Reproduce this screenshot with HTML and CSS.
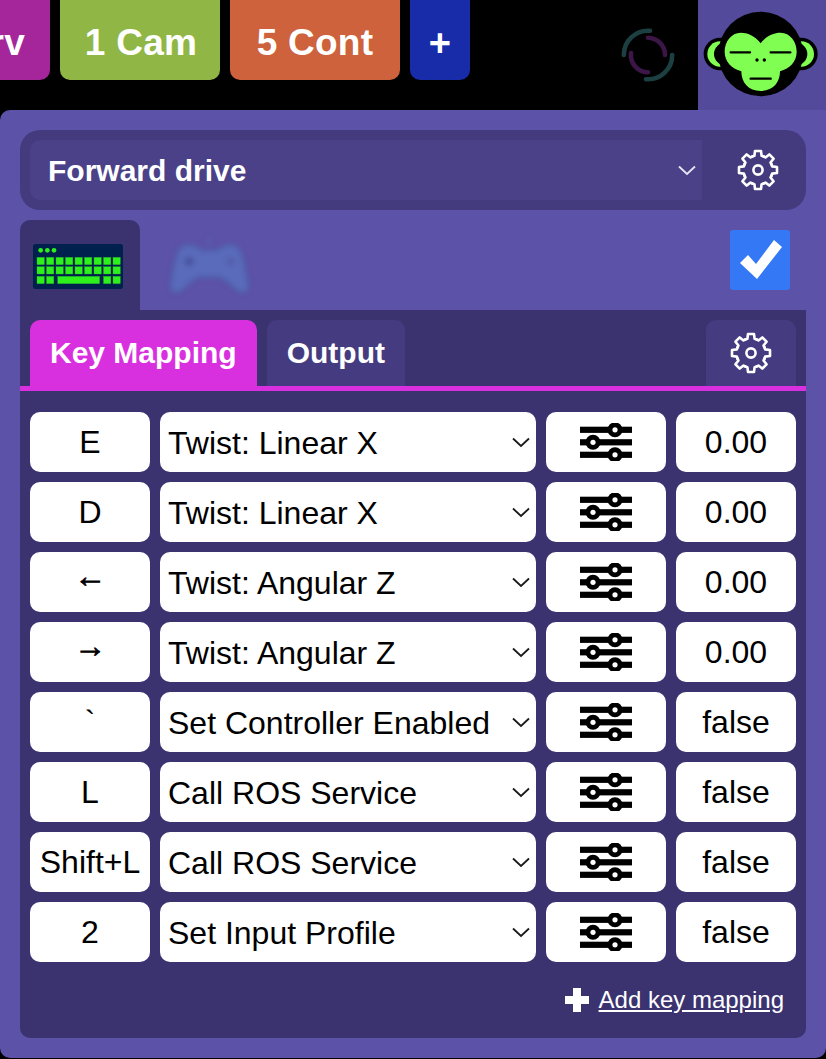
FILE: index.html
```html
<!DOCTYPE html>
<html lang="en">
<head>
<meta charset="utf-8">
<title>Input</title>
<link rel="stylesheet" href="styles.css">
</head>
<body>
<svg class="defs" width="0" height="0" aria-hidden="true">
  <defs>
    <symbol id="gear" viewBox="-22 -22 44 44">
      <g class="gear-lines">
        <polyline id="tooth" points="-6,-13.4 -3.6,-14.13 -3,-19 3,-19 3.6,-14.13 6,-13.4"/>
        <polyline transform="rotate(45)" points="-6,-13.4 -3.6,-14.13 -3,-19 3,-19 3.6,-14.13 6,-13.4"/>
        <polyline transform="rotate(90)" points="-6,-13.4 -3.6,-14.13 -3,-19 3,-19 3.6,-14.13 6,-13.4"/>
        <polyline transform="rotate(135)" points="-6,-13.4 -3.6,-14.13 -3,-19 3,-19 3.6,-14.13 6,-13.4"/>
        <polyline transform="rotate(180)" points="-6,-13.4 -3.6,-14.13 -3,-19 3,-19 3.6,-14.13 6,-13.4"/>
        <polyline transform="rotate(225)" points="-6,-13.4 -3.6,-14.13 -3,-19 3,-19 3.6,-14.13 6,-13.4"/>
        <polyline transform="rotate(270)" points="-6,-13.4 -3.6,-14.13 -3,-19 3,-19 3.6,-14.13 6,-13.4"/>
        <polyline transform="rotate(315)" points="-6,-13.4 -3.6,-14.13 -3,-19 3,-19 3.6,-14.13 6,-13.4"/>
        <circle r="4.6"/>
      </g>
    </symbol>
    <symbol id="sliders" viewBox="0 0 52 38">
      <rect x="0" y="3.700" width="52" height="6.200"/>
      <rect x="0" y="16.200" width="52" height="6.200"/>
      <rect x="0" y="28.700" width="52" height="6.200"/>
      <circle cx="35" cy="6.800" r="7.500"/><circle cx="35" cy="6.800" r="2.600" fill="#fff"/>
      <circle cx="13" cy="19.300" r="7.500"/><circle cx="13" cy="19.300" r="2.600" fill="#fff"/>
      <circle cx="35" cy="31.800" r="7.500"/><circle cx="35" cy="31.800" r="2.600" fill="#fff"/>
    </symbol>
    <symbol id="chev" viewBox="0 0 18 11">
      <polyline points="1,1.500 9,9 17,1.500"/>
    </symbol>
  </defs>
</svg>

<header class="topbar">
  <div class="tab tab-serv"><span>Serv</span></div>
  <div class="tab tab-cam">1 Cam</div>
  <div class="tab tab-cont">5 Cont</div>
  <div class="tab tab-add">+</div>
  <svg class="spinner" width="60" height="60" viewBox="-30 -30 60 60">
    <path class="spin-outer" d="M2 -24.200 A24.200 24.200 0 0 0 -24.200 0"/>
    <path class="spin-outer" d="M-2 24.200 A24.200 24.200 0 0 0 24.200 0"/>
    <path class="spin-inner" d="M0 -17.200 A17.200 17.200 0 0 1 17 0"/>
    <path class="spin-inner" d="M0 17.200 A17.200 17.200 0 0 1 -17 -2"/>
  </svg>
  <div class="avatar">
    <svg width="128" height="110" viewBox="294 0 384 330">
      <circle cx="360" cy="162" r="49" fill="#000"/>
      <circle cx="604" cy="162" r="49" fill="#000"/>
      <circle cx="360" cy="162" r="38" fill="#80ff52"/>
      <circle cx="604" cy="162" r="38" fill="#80ff52"/>
      <circle cx="376" cy="162" r="34" fill="#000"/>
      <circle cx="588" cy="162" r="34" fill="#000"/>
      <circle cx="482" cy="162" r="127" fill="#000"/>
      <path fill="#80ff52" d="M482 130C465 107 442 98 422 98C394 98 374 125 374 155C374 185 394 205 424 214C424 248 445 273 482 273C519 273 540 248 540 214C570 205 590 185 590 155C590 125 570 98 542 98C522 98 499 107 482 130Z"/>
      <path class="mk-line" d="M392 157H450M512 157H571"/>
      <path class="mk-line" d="M452 236H512"/>
      <circle cx="471" cy="180" r="5"/>
      <circle cx="493" cy="180" r="5"/>
    </svg>
  </div>
</header>

<main class="panel">
  <div class="profile">
    <div class="profile-select">
      <select class="profile-input"><option>Forward drive</option></select>
      <svg class="chev chev-light" width="18" height="11"><use href="#chev"/></svg>
    </div>
    <svg class="gear gear-profile" width="44" height="44"><use href="#gear"/></svg>
  </div>

  <div class="devices">
    <div class="device device-active">
      <svg width="90" height="45" viewBox="100 102 270 135">
        <rect class="kb-bg" x="100" y="102" width="270" height="135" rx="8"/>
        <g class="kb-dot"><circle cx="123" cy="121" r="7"/><circle cx="143" cy="121" r="7"/><circle cx="163" cy="121" r="7"/></g>
        <g class="kb-key">
          <rect x="112" y="142" width="22" height="22"/><rect x="140.500" y="142" width="22" height="22"/><rect x="169" y="142" width="22" height="22"/><rect x="197.500" y="142" width="22" height="22"/><rect x="226" y="142" width="22" height="22"/><rect x="254.500" y="142" width="22" height="22"/><rect x="283" y="142" width="22" height="22"/><rect x="311.500" y="142" width="22" height="22"/><rect x="340" y="142" width="22" height="22"/>
          <rect x="112" y="170" width="22" height="22"/><rect x="140.500" y="170" width="22" height="22"/><rect x="169" y="170" width="22" height="22"/><rect x="197.500" y="170" width="22" height="22"/><rect x="226" y="170" width="22" height="22"/><rect x="254.500" y="170" width="22" height="22"/><rect x="283" y="170" width="22" height="22"/><rect x="311.500" y="170" width="22" height="22"/><rect x="340" y="170" width="22" height="22"/>
          <rect x="112" y="199" width="22" height="22"/><rect x="140.500" y="199" width="22" height="22"/><rect x="174" y="199" width="126" height="22"/><rect x="311.500" y="199" width="22" height="22"/><rect x="340" y="199" width="22" height="22"/>
        </g>
      </svg>
    </div>
    <div class="device device-pad">
      <svg class="gamepad" width="94" height="75" viewBox="490 60 280 224">
        <path class="pad-cord" d="M628 75V110"/>
        <path class="pad-body" d="M550 108C572 100 592 110 606 122H650C664 110 684 100 706 108C726 116 734 170 743 222C747 246 724 252 708 238C692 222 678 206 658 200H598C578 206 564 222 548 238C532 252 509 246 513 222C522 170 530 116 550 108Z"/>
        <circle class="pad-hole" cx="568" cy="154" r="15"/>
        <circle class="pad-hole-soft" cx="692" cy="154" r="15"/>
      </svg>
    </div>
    <div class="check">
      <svg width="44" height="42" viewBox="0 0 44 42"><path d="M2 24L10 16 18 25 36 1 44 8 19 40Z"/></svg>
    </div>
  </div>

  <section class="content">
    <nav class="subtabs">
      <div class="subtab subtab-active">Key Mapping</div>
      <div class="subtab">Output</div>
      <div class="subtab subtab-gear"><svg class="gear" width="44" height="44"><use href="#gear"/></svg></div>
    </nav>

    <div class="rows">
      <div class="row"><div class="cell">E</div><div class="select-wrap"><select class="cell-select"><option>Twist: Linear X</option></select><svg class="chev" width="18" height="11"><use href="#chev"/></svg></div><div class="cell"><svg class="slider-icon" width="52" height="38"><use href="#sliders"/></svg></div><div class="cell">0.00</div></div>
      <div class="row"><div class="cell">D</div><div class="select-wrap"><select class="cell-select"><option>Twist: Linear X</option></select><svg class="chev" width="18" height="11"><use href="#chev"/></svg></div><div class="cell"><svg class="slider-icon" width="52" height="38"><use href="#sliders"/></svg></div><div class="cell">0.00</div></div>
      <div class="row"><div class="cell cell-arrow">←</div><div class="select-wrap"><select class="cell-select"><option>Twist: Angular Z</option></select><svg class="chev" width="18" height="11"><use href="#chev"/></svg></div><div class="cell"><svg class="slider-icon" width="52" height="38"><use href="#sliders"/></svg></div><div class="cell">0.00</div></div>
      <div class="row"><div class="cell cell-arrow">→</div><div class="select-wrap"><select class="cell-select"><option>Twist: Angular Z</option></select><svg class="chev" width="18" height="11"><use href="#chev"/></svg></div><div class="cell"><svg class="slider-icon" width="52" height="38"><use href="#sliders"/></svg></div><div class="cell">0.00</div></div>
      <div class="row"><div class="cell">`</div><div class="select-wrap"><select class="cell-select"><option>Set Controller Enabled</option></select><svg class="chev" width="18" height="11"><use href="#chev"/></svg></div><div class="cell"><svg class="slider-icon" width="52" height="38"><use href="#sliders"/></svg></div><div class="cell">false</div></div>
      <div class="row"><div class="cell">L</div><div class="select-wrap"><select class="cell-select"><option>Call ROS Service</option></select><svg class="chev" width="18" height="11"><use href="#chev"/></svg></div><div class="cell"><svg class="slider-icon" width="52" height="38"><use href="#sliders"/></svg></div><div class="cell">false</div></div>
      <div class="row"><div class="cell">Shift+L</div><div class="select-wrap"><select class="cell-select"><option>Call ROS Service</option></select><svg class="chev" width="18" height="11"><use href="#chev"/></svg></div><div class="cell"><svg class="slider-icon" width="52" height="38"><use href="#sliders"/></svg></div><div class="cell">false</div></div>
      <div class="row"><div class="cell">2</div><div class="select-wrap"><select class="cell-select"><option>Set Input Profile</option></select><svg class="chev" width="18" height="11"><use href="#chev"/></svg></div><div class="cell"><svg class="slider-icon" width="52" height="38"><use href="#sliders"/></svg></div><div class="cell">false</div></div>
    </div>

    <div class="add-row">
      <svg class="add-plus" width="24" height="24" viewBox="0 0 24 24"><path d="M8 0H16V8H24V16H16V24H8V16H0V8H8Z"/></svg>
      <a class="add-link" href="#">Add key mapping</a>
    </div>
  </section>
</main>
</body>
</html>
```
FILE: styles.css
```css
* { box-sizing: border-box; }
html, body { margin: 0; padding: 0; }
body {
  width: 826px;
  height: 1059px;
  overflow: hidden;
  background: #000;
  font-family: "Liberation Sans", Arial, sans-serif;
  color: #000;
}
.defs { display: block; width: 0; height: 0; }
.gear-lines polyline, .gear-lines circle {
  fill: none;
  stroke: #fff;
  stroke-width: 2.6;
  stroke-linejoin: round;
  stroke-linecap: round;
}

.topbar {
  display: flex;
  align-items: flex-start;
  gap: 10px;
  height: 110px;
  background: #000;
}
.tab {
  display: flex;
  align-items: center;
  justify-content: center;
  height: 80px;
  padding-top: 5px;
  border-radius: 0 0 10px 10px;
  color: #fff;
  font-size: 37px;
  font-weight: 700;
  letter-spacing: 0.25px;
  white-space: nowrap;
  overflow: hidden;
}
.tab-serv { width: 50px; background: #a4269a; justify-content: flex-end; padding-right: 25px; border-radius: 0 0 10px 0; }
.tab-cam { width: 160px; padding-left: 2px; background: #90b745; }
.tab-cont { width: 170px; background: #cd623c; }
.tab-add { width: 60px; background: #182ba9; font-size: 38px; padding-top: 6px; }
.spinner { margin: 25px 10px 0 auto; }
.spin-outer, .spin-inner { fill: none; stroke-width: 4.6; stroke-linecap: round; }
.spin-outer { stroke: #1c3f42; }
.spin-inner { stroke: #3b1647; }
.avatar { width: 128px; height: 110px; background: #534a9b; flex: none; }
.avatar svg { display: block; }
.mk-line { fill: none; stroke: #000; stroke-width: 7; stroke-linecap: round; }

.panel {
  height: 948px;
  padding: 20px;
  border-radius: 10px 0 10px 10px;
  background: #5c52a8;
}
.profile {
  display: flex;
  align-items: center;
  height: 80px;
  padding: 10px 0 10px 10px;
  border-radius: 20px;
  background: #443b7f;
}
.profile-select { position: relative; width: 672px; height: 60px; }
.profile-input {
  display: block;
  width: 100%;
  height: 60px;
  padding: 0 18px;
  border: 0;
  border-radius: 10px 0 0 10px;
  appearance: none;
  background: #4a4188;
  color: #fff;
  font: 700 30px "Liberation Sans", Arial, sans-serif;
}
.chev {
  position: absolute;
  top: 25px;
  right: 6px;
  fill: none;
  stroke: #1a1a1a;
  stroke-width: 1.8;
  pointer-events: none;
}
.chev-light { stroke: #e8e6f4; }
.gear-profile { margin-left: 34px; }

.devices {
  display: flex;
  height: 90px;
  margin-top: 10px;
}
.device {
  display: flex;
  align-items: center;
  justify-content: center;
  width: 120px;
  height: 90px;
}
.device-active {
  padding: 2px 4px 0 0;
  border-radius: 10px 10px 0 0;
  background: #3b3270;
}
.device-pad { align-items: flex-start; justify-content: flex-start; }
.gamepad { margin: 10px 0 0 23px; filter: blur(2.5px); }
.pad-cord { fill: none; stroke: #5366b3; stroke-width: 5; }
.pad-body { fill: #5a6bbb; stroke: #5060ac; stroke-width: 8; }
.pad-hole { fill: #4b56a3; }
.pad-hole-soft { fill: #5560ae; }
.check {
  display: flex;
  align-items: center;
  justify-content: center;
  width: 60px;
  height: 60px;
  margin: 10px 16px 0 auto;
  border-radius: 3px;
  background: #3478f6;
}
.check path { fill: #fff; }
.kb-bg { fill: #00204e; }
.kb-dot circle { fill: #2ef01c; }
.kb-key rect { fill: #2ef01c; stroke: #25b52a; stroke-width: 1; }

.content {
  height: 728px;
  padding: 10px 10px 0;
  border-radius: 0 0 10px 10px;
  background: #3b3270;
}
.subtabs {
  display: flex;
  gap: 10px;
  height: 71px;
  margin: 0 -10px;
  padding: 0 10px;
  border-bottom: 5px solid #d82fdf;
}
.subtab {
  display: flex;
  align-items: center;
  height: 66px;
  padding: 0 20px;
  border-radius: 10px 10px 0 0;
  background: #453b80;
  color: #fff;
  font-size: 30px;
  font-weight: 700;
}
.subtab-active { background: #d82fdf; }
.subtab-gear { width: 90px; padding: 0; justify-content: center; margin-left: auto; }

.rows {
  display: flex;
  flex-direction: column;
  gap: 10px;
  margin-top: 21px;
}
.row {
  display: grid;
  grid-template-columns: 120px 376px 120px 120px;
  gap: 10px;
  height: 60px;
}
.cell {
  display: flex;
  align-items: center;
  justify-content: center;
  border-radius: 10px;
  background: #fff;
  font-size: 32px;
  white-space: nowrap;
}
.cell-arrow {
  padding-bottom: 12px;
  font-weight: 700;
  -webkit-text-stroke: 0.8px #000;
}
.select-wrap { position: relative; }
.cell-select {
  display: block;
  width: 100%;
  height: 60px;
  padding: 2px 8px 0;
  border: 0;
  border-radius: 10px;
  appearance: none;
  background: #fff;
  color: #000;
  font: 32px "Liberation Sans", Arial, sans-serif;
}
.slider-icon { fill: #000; }

.add-row {
  display: flex;
  align-items: center;
  justify-content: flex-end;
  gap: 10px;
  margin-top: 24px;
  padding-right: 12px;
}
.add-plus { fill: #fff; }
.add-link { color: #fff; font-size: 24px; text-decoration: underline; }
```
